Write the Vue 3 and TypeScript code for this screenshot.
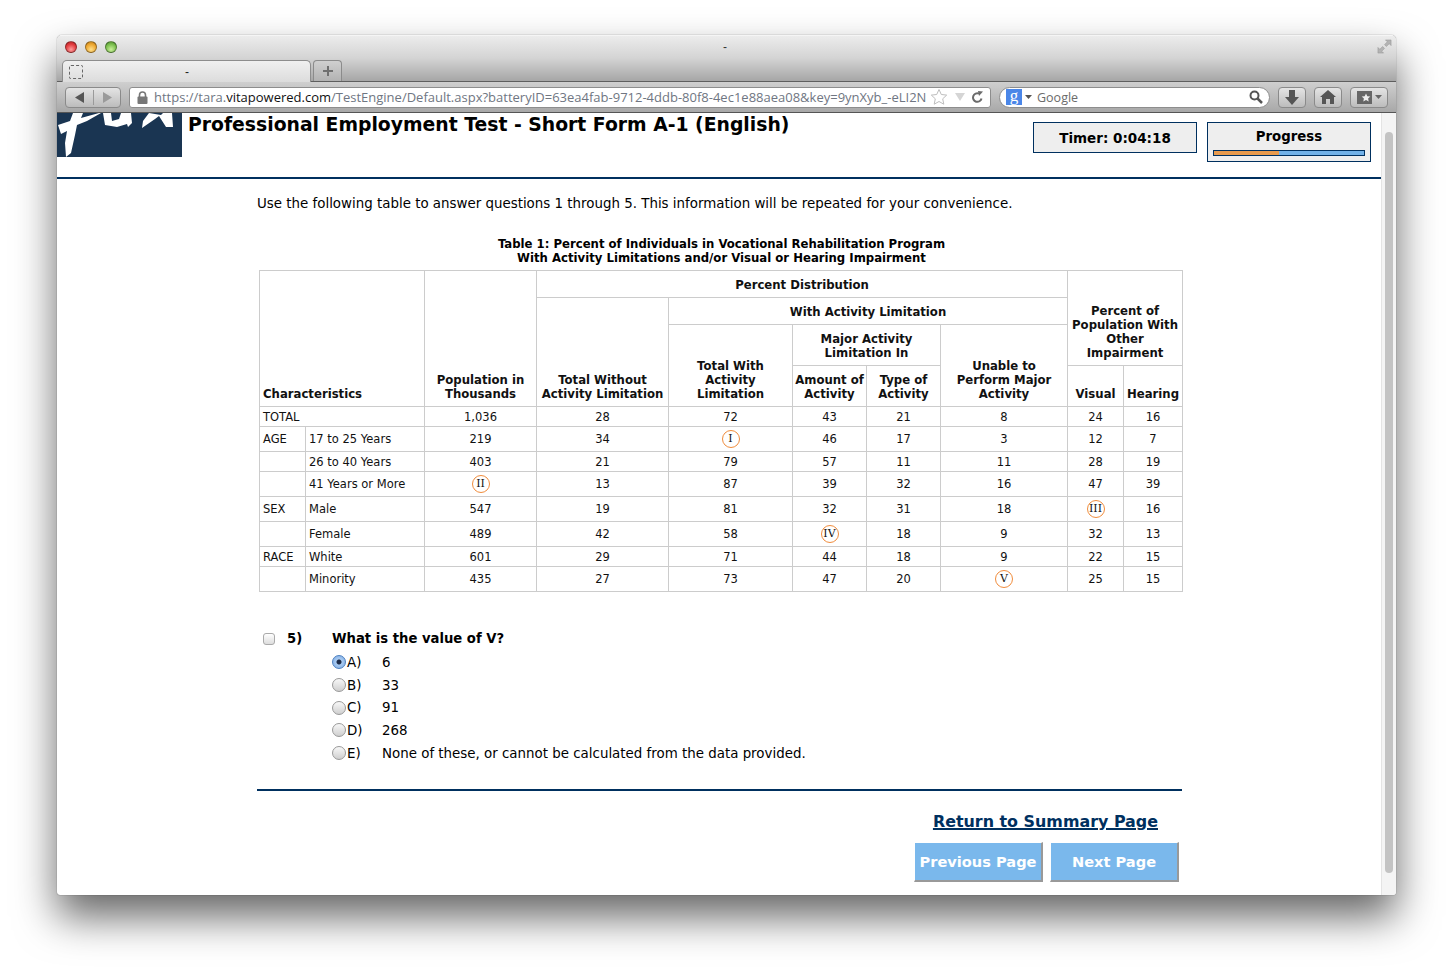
<template>
  <div class="desk">
    <div class="window">
      <div class="titlebar">
        <div class="lights">
          <span class="light red"></span>
          <span class="light amber"></span>
          <span class="light green"></span>
        </div>
        <div class="win-title">-</div>
        <svg class="fullscreen" width="15" height="15" viewBox="0 0 16 16">
          <path d="M9 1h6v6l-2-2-3 3-2-2 3-3zM7 15H1V9l2 2 3-3 2 2-3 3z" fill="#b4b4b4" stroke="#8f8f8f" stroke-width=".5" />
        </svg>
      </div>
      <div class="tabbar">
        <div class="tab">
          <span class="favicon"></span>
          <span class="tab-title">-</span>
        </div>
        <div class="newtab">
          <svg width="12" height="12" viewBox="0 0 12 12"><path d="M5 1h2v4h4v2H7v4H5V7H1V5h4z" fill="#6f6f6f" /></svg>
        </div>
      </div>
      <div class="toolbar">
        <div class="btn nav">
          <svg width="10" height="11" viewBox="0 0 10 11"><path d="M9 0v11L0 5.5z" fill="#555" /></svg>
          <i></i>
          <svg width="10" height="11" viewBox="0 0 10 11"><path d="M1 0v11l9-5.500z" fill="#9a9a9a" /></svg>
        </div>
        <div class="urlbar">
          <svg class="lock" width="11" height="13" viewBox="0 0 11 13">
            <path d="M2.500 6V4a3 3 0 0 1 6 0v2" fill="none" stroke="#777" stroke-width="1.600" />
            <rect x="0.500" y="5.500" width="10" height="7.500" rx="1" fill="#777" />
          </svg>
          <span class="url"><span>https://tara.</span><b>vitapowered.com</b><span>/TestEngine/Default.aspx?batteryID=63ea4fab-9712-4ddb-80f8-4ec1e88aea08&amp;key=9ynXyb_-eLI2N</span></span>
          <svg width="18" height="18" viewBox="0 0 18 18"><path d="M9 1.500l2.300 5 5.400.6-4 3.700 1.100 5.400L9 13.500l-4.800 2.700 1.100-5.400-4-3.700 5.400-.6z" fill="#fff" stroke="#bdbdbd" /></svg>
          <svg class="mark" width="10" height="8" viewBox="0 0 10 8"><path d="M0 0h10L5 8z" fill="#d5d5d5" /></svg>
          <svg width="13" height="13" viewBox="0 0 13 13"><path d="M10.500 7.500A4.300 4.300 0 1 1 8 2.600" fill="none" stroke="#6b6b6b" stroke-width="2" /><path d="M7 0l5 .5L8 5z" fill="#6b6b6b" /></svg>
        </div>
        <div class="searchbar">
          <span class="gbadge">g</span>
          <svg width="7" height="4" viewBox="0 0 7 4"><path d="M0 0h7L3.500 4z" fill="#555" /></svg>
          <span class="search-label">Google</span>
          <svg class="magnifier" width="14" height="14" viewBox="0 0 14 14"><circle cx="5.500" cy="5.500" r="4" fill="none" stroke="#555" stroke-width="2" /><path d="M8.500 8.500L13 13" stroke="#555" stroke-width="2.500" /></svg>
        </div>
        <div class="btn square">
          <svg width="14" height="15" viewBox="0 0 14 15"><path d="M4 0h6v7h4l-7 8-7-8h4z" fill="#555" /></svg>
        </div>
        <div class="btn square">
          <svg width="16" height="14" viewBox="0 0 16 14"><path d="M8 0l8 7h-2v7h-4V9H6v5H2V7H0z" fill="#555" /></svg>
        </div>
        <div class="btn bookmarks">
          <svg width="15" height="13" viewBox="0 0 15 13"><rect width="15" height="13" fill="#666" /><path d="M9 2.500l1.300 2.700 3 .4-2.200 2 .6 3L9 9.100l-2.700 1.500.6-3-2.200-2 3-.4z" fill="#eee" /></svg>
          <svg width="7" height="4" viewBox="0 0 7 4"><path d="M0 0h7L3.500 4z" fill="#666" /></svg>
        </div>
      </div>
      <div class="viewport">
        <div class="page">
          <header class="page-head">
            <svg class="logo" width="125" height="44" viewBox="0 0 125 44">
              <rect width="125" height="44" fill="#1a3552" />
              <path d="M1 12l12-4 3-8h10l-2 5L42 0h2l-14 8-10 4-2 10-4 18-5 4-1-14 2-12-6 3z" fill="#fff" />
              <path d="M46 0l2 12 12 2 10-3 1 3 4-4-1-10H64l-2 6-7 2-1-8z" fill="#fff" />
              <path d="M85 15l13-9 4-3 7 11h7L115 0h-9l-2 2-12-2-6 8z" fill="#fff" />
            </svg>
            <h1>Professional Employment Test - Short Form A-1 (English)</h1>
            <div class="timer">Timer: 0:04:18</div>
            <div class="progress">
              <div class="progress-label">Progress</div>
              <div class="progress-track"><div class="progress-fill" :style="{ width: progress + '%' }"></div></div>
            </div>
          </header>

          <section class="content">
            <p class="intro">Use the following table to answer questions 1 through 5. This information will be repeated for your convenience.</p>
            <div class="caption">Table 1: Percent of Individuals in Vocational Rehabilitation Program<br />With Activity Limitations and/or Visual or Hearing Impairment</div>
            <table class="data">
              <colgroup>
                <col v-for="w in colWidths" :key="w.id" :style="{ width: w.px + 'px' }" />
              </colgroup>
              <thead>
                <tr class="h27">
                  <th rowspan="4" colspan="2" class="left">Characteristics</th>
                  <th rowspan="4">Population in<br />Thousands</th>
                  <th colspan="5" class="mid">Percent Distribution</th>
                  <th rowspan="3" colspan="2">Percent of<br />Population With<br />Other<br />Impairment</th>
                </tr>
                <tr class="h27">
                  <th rowspan="3">Total Without<br />Activity Limitation</th>
                  <th colspan="4" class="mid">With Activity Limitation</th>
                </tr>
                <tr class="h41">
                  <th rowspan="2">Total With<br />Activity<br />Limitation</th>
                  <th colspan="2">Major Activity<br />Limitation In</th>
                  <th rowspan="2">Unable to<br />Perform Major<br />Activity</th>
                </tr>
                <tr class="h41">
                  <th>Amount of<br />Activity</th>
                  <th>Type of<br />Activity</th>
                  <th>Visual</th>
                  <th>Hearing</th>
                </tr>
              </thead>
              <tbody>
                <tr v-for="row in rows" :key="row.label" :style="{ height: row.h + 'px' }">
                  <template v-if="row.total">
                    <td colspan="2" class="left">{{ row.label }}</td>
                  </template>
                  <template v-else>
                    <td class="left">{{ row.group }}</td>
                    <td class="left">{{ row.label }}</td>
                  </template>
                  <td v-for="(v, i) in row.values" :key="i">
                    <span v-if="v.startsWith('*')" class="ring">{{ v.slice(1) }}</span>
                    <template v-else>{{ v }}</template>
                  </td>
                </tr>
              </tbody>
            </table>

            <div class="question">
              <span class="check"></span>
              <span class="qnum">5)</span>
              <span class="qtext">What is the value of V?</span>
            </div>
            <ul class="options">
              <li v-for="o in options" :key="o.key">
                <span class="radio" :class="{ on: o.key === 'A' }"></span>
                <span class="okey">{{ o.key }})</span>
                <span>{{ o.text }}</span>
              </li>
            </ul>

            <div class="rule"></div>
            <div class="foot">
              <a class="summary">Return to Summary Page</a>
              <div class="pager">
                <div class="pagebtn">Previous Page</div>
                <div class="pagebtn">Next Page</div>
              </div>
            </div>
          </section>
        </div>
        <div class="scrollbar"><div class="thumb"></div></div>
      </div>
    </div>
  </div>
</template>

<script setup lang="ts">
interface Row {
  group?: string;
  label: string;
  total?: boolean;
  h: number;
  values: string[];
}

const progress = 43.5;

const colWidths = [46, 119, 112, 132, 124, 74, 74, 127, 56, 59].map((px, id) => ({ id, px }));

const rows: Row[] = [
  { label: 'TOTAL', total: true, h: 20, values: ['1,036', '28', '72', '43', '21', '8', '24', '16'] },
  { group: 'AGE', label: '17 to 25 Years', h: 25, values: ['219', '34', '*I', '46', '17', '3', '12', '7'] },
  { label: '26 to 40 Years', h: 20, values: ['403', '21', '79', '57', '11', '11', '28', '19'] },
  { label: '41 Years or More', h: 25, values: ['*II', '13', '87', '39', '32', '16', '47', '39'] },
  { group: 'SEX', label: 'Male', h: 25, values: ['547', '19', '81', '32', '31', '18', '*III', '16'] },
  { label: 'Female', h: 25, values: ['489', '42', '58', '*IV', '18', '9', '32', '13'] },
  { group: 'RACE', label: 'White', h: 20, values: ['601', '29', '71', '44', '18', '9', '22', '15'] },
  { label: 'Minority', h: 25, values: ['435', '27', '73', '47', '20', '*V', '25', '15'] }
];

const options = [
  { key: 'A', text: '6' },
  { key: 'B', text: '33' },
  { key: 'C', text: '91' },
  { key: 'D', text: '268' },
  { key: 'E', text: 'None of these, or cannot be calculated from the data provided.' }
];
</script>

<style>
html, body {
  margin: 0;
  background: #fff;
}
</style>

<style scoped>
.desk {
  box-sizing: border-box;
  height: 974px;
  padding: 35px 0 0 57px;
  overflow: hidden;
}
.window {
  box-sizing: border-box;
  width: 1339px;
  height: 860px;
  border-radius: 5px 5px 3px 3px;
  overflow: hidden;
  box-shadow: 0 22px 42px rgba(0, 0, 0, 0.6), 0 0 1px rgba(0, 0, 0, 0.7);
  display: flex;
  flex-direction: column;
  font-family: "DejaVu Sans", Verdana, sans-serif;
  color: #000;
  background: #fff;
}

.titlebar {
  height: 23px;
  display: flex;
  align-items: center;
  padding: 0 4px 0 8px;
  background: linear-gradient(#ececec, #d4d4d4);
  border-top: 1px solid #f5f5f5;
  box-sizing: border-box;
}
.lights { display: flex; gap: 8px; width: 640px; margin-bottom: 1px; }
.light {
  width: 12px;
  height: 12px;
  border-radius: 50%;
  border: 1px solid rgba(0, 0, 0, 0.35);
  box-sizing: border-box;
}
.red { background: radial-gradient(circle at 50% 75%, #ff9c9c, #e0393c 60%, #a82225); }
.amber { background: radial-gradient(circle at 50% 75%, #ffe08a, #eca52e 60%, #b1761a); }
.green { background: radial-gradient(circle at 50% 75%, #c9f09a, #79bd4c 60%, #47832c); }
.win-title { flex: 1; font-size: 12px; color: #333; line-height: 12px; margin-left: 18px; font-family: "Liberation Sans", sans-serif; }
.fullscreen { margin-bottom: 1px; }

.tabbar {
  height: 24px;
  display: flex;
  align-items: flex-end;
  padding-left: 5px;
  background: linear-gradient(#d4d4d4, #a6a6a6);
  border-bottom: 1px solid #5e5e5e;
  box-sizing: border-box;
}
.tab {
  width: 249px;
  height: 22px;
  margin-bottom: -1px;
  border: 1px solid #8d8d8d;
  border-bottom: none;
  border-radius: 5px 5px 0 0;
  background: linear-gradient(#f0f0f0, #dcdcdc);
  box-sizing: border-box;
  display: flex;
  align-items: center;
  padding-left: 6px;
}
.favicon {
  width: 14px;
  height: 14px;
  border: 1px dashed #666;
  border-radius: 2px;
  box-sizing: border-box;
}
.tab-title { width: 208px; text-align: center; font-size: 12px; font-family: "Liberation Sans", sans-serif; color: #222; }
.newtab {
  width: 29px;
  height: 21px;
  margin-left: 2px;
  border: 1px solid #8b8b8b;
  border-bottom: none;
  border-radius: 4px 4px 0 0;
  background: linear-gradient(#d0d0d0, #b2b2b2);
  display: flex;
  align-items: center;
  justify-content: center;
  box-sizing: border-box;
}

.toolbar {
  height: 31px;
  display: flex;
  align-items: center;
  padding: 0 7px 0 8px;
  background: linear-gradient(#cfcfcf, #a8a8a8);
  border-bottom: 1px solid #555;
  box-sizing: border-box;
}
.btn {
  height: 21px;
  border: 1px solid #8a8a8a;
  border-radius: 4px;
  background: linear-gradient(#e4e4e4, #bcbcbc);
  display: flex;
  align-items: center;
  justify-content: center;
  box-sizing: border-box;
}
.nav { width: 56px; gap: 8px; }
.nav i { width: 1px; height: 15px; background: #9a9a9a; }
.square { width: 28px; margin-left: 8px; }
.bookmarks { width: 38px; margin-left: 8px; gap: 3px; }

.urlbar {
  width: 862px;
  height: 21px;
  margin-left: 8px;
  background: #fff;
  border: 1px solid #8d8d8d;
  border-radius: 3px;
  display: flex;
  align-items: center;
  padding: 0 6px 0 7px;
  box-sizing: border-box;
  gap: 4px;
}
.lock { flex: none; margin-right: 2px; }
.url {
  flex: 1;
  white-space: nowrap;
  overflow: hidden;
  font-size: 13px;
  font-family: "Open Sans", "DejaVu Sans", sans-serif;
  color: #6f7682;
}
.url b { font-weight: 400; color: #111; }
.mark { margin: 0 2px 0 3px; }

.searchbar {
  width: 271px;
  height: 21px;
  margin-left: 8px;
  background: #fff;
  border: 1px solid #8d8d8d;
  border-radius: 11px;
  display: flex;
  align-items: center;
  padding: 0 6px;
  box-sizing: border-box;
  gap: 3px;
}
.gbadge {
  width: 16px;
  height: 16px;
  background: #4a86e8;
  color: #fff;
  font: 17px/13px "Liberation Serif", serif;
  text-align: center;
}
.search-label { flex: 1; font-size: 12.500px; font-family: "Open Sans", sans-serif; color: #6b6b6b; margin-left: 2px; }

.viewport { flex: 1; display: flex; min-height: 0; }
.page { flex: 1; min-width: 0; overflow: hidden; }
.scrollbar {
  width: 15px;
  background: #f4f4f4;
  border-left: 1px solid #e4e4e4;
  box-sizing: border-box;
  padding: 19px 3px 0 3px;
}
.thumb { height: 741px; border-radius: 5px; background: #c3c3c3; }

.page-head {
  display: flex;
  align-items: flex-start;
  border-bottom: 2px solid #00305f;
  height: 64px;
}
.logo { flex: none; }
.page-head h1 {
  flex: 1;
  margin: 0 0 0 6px;
  padding-top: 1px;
  font-size: 18.800px;
  line-height: 22px;
  font-weight: 700;
}
.timer {
  width: 164px;
  height: 31px;
  margin-top: 9px;
  box-sizing: border-box;
  border: 1px solid #00305f;
  background: #eee;
  text-align: center;
  font-weight: 700;
  font-size: 13.500px;
  line-height: 30px;
}
.progress {
  width: 164px;
  height: 40px;
  margin: 9px 10px 0 10px;
  box-sizing: border-box;
  border: 1px solid #00305f;
  background: #eee;
  padding: 1px 5px 0;
  text-align: center;
  font-weight: 700;
  font-size: 13.300px;
  line-height: 26px;
}
.progress-track {
  height: 6px;
  border: 1px solid #00305f;
  background: #73b2e8;
  box-sizing: border-box;
}
.progress-fill { height: 100%; background: #e89a4d; }

.content { margin-left: 200px; width: 925px; }
.intro {
  margin: 16px 0 0;
  font-size: 13.400px;
  line-height: 17px;
}
.caption {
  margin: 25px 0 5px 2px;
  font-size: 11.700px;
  line-height: 14px;
  font-weight: 700;
  text-align: center;
  width: 925px;
}
.data {
  margin-left: 2px;
  table-layout: fixed;
  border-collapse: collapse;
  width: 923px;
  font-size: 11.500px;
  color: #111;
}
.data th, .data td {
  border: 1px solid #ccc;
  padding: 0 3px;
  text-align: center;
}
.data th {
  vertical-align: bottom;
  padding: 0 1px 5px;
  font-size: 11.700px;
  line-height: 14px;
  font-weight: 700;
}
.data th.left { padding-left: 3px; }
.data th.mid { vertical-align: middle; padding: 1px 1px 0; }
.data .left { text-align: left; }
.h27 { height: 27px; }
.h41 { height: 41px; }
.ring {
  display: inline-block;
  width: 18px;
  height: 18px;
  border: 1.500px solid #f08c3c;
  border-radius: 50%;
  box-sizing: border-box;
  font: 11px/15px "DejaVu Serif", serif;
  vertical-align: middle;
}

.question {
  display: flex;
  align-items: center;
  margin: 38px 0 0 6px;
  font-size: 13.200px;
  font-weight: 700;
  height: 17px;
}
.check {
  width: 12px;
  height: 12px;
  border: 1px solid #aaa;
  border-radius: 3px;
  background: linear-gradient(#fff, #ddd);
  box-sizing: border-box;
}
.qnum { margin-left: 12px; width: 45px; }
.options {
  list-style: none;
  margin: 4px 0 0 75px;
  padding: 0;
  font-size: 13.400px;
}
.options li {
  display: flex;
  align-items: center;
  height: 22.700px;
}
.radio {
  width: 14px;
  height: 14px;
  border: 1px solid #999;
  border-radius: 50%;
  box-sizing: border-box;
  background: linear-gradient(#f8f8f8, #cfcfcf);
}
.radio.on {
  border-color: #4b7fc0;
  background: radial-gradient(circle, #1d2c4a 0 2px, #a9cbf2 3px, #7aa7e0);
}
.okey { width: 35px; margin-left: 1px; }

.rule { height: 2px; background: #00305f; margin-top: 25px; }
.foot {
  display: flex;
  flex-direction: column;
  align-items: flex-end;
  padding-right: 3px;
}
.summary {
  margin: 21px 21px 0 0;
  font-size: 15.900px;
  line-height: 20px;
  font-weight: 700;
  color: #00305f;
  text-decoration: underline;
  text-decoration-thickness: 2px;
}
.pager { display: flex; gap: 7px; margin-top: 10px; }
.pagebtn {
  width: 129px;
  height: 40px;
  box-sizing: border-box;
  background: #7ab8ec;
  border-style: solid;
  border-width: 1px 2px 2px 1px;
  border-color: #fff #999 #999 #fff;
  color: #fff;
  font-size: 14.600px;
  font-weight: 700;
  line-height: 37px;
  text-align: center;
  white-space: nowrap;
}
</style>
